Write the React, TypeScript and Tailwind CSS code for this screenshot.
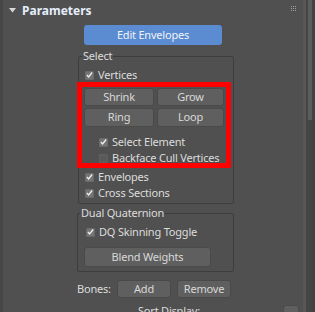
import React from "react";

const FONT = { fontFamily: '"Noto Sans", "DejaVu Sans", sans-serif' };

function Check({ checked }: { checked: boolean }) {
  return (
    <span
      className={
        "flex h-[9px] w-[9px] shrink-0 items-center justify-center rounded-[1px] border " +
        (checked ? "border-[#6a6a6a] bg-[#747474]" : "border-[#626262] bg-[#5a5a5a]")
      }
    >
      {checked && (
        <svg width="8" height="8" viewBox="0 0 8 8">
          <polyline points="1,4 3,6.2 7,1.2" fill="none" stroke="#ececec" strokeWidth="1.6" />
        </svg>
      )}
    </span>
  );
}

function CheckRow({ label, checked, className }: { label: string; checked: boolean; className: string }) {
  return (
    <div className={"flex h-[14px] shrink-0 items-center " + className}>
      <Check checked={checked} />
      <span className="ml-[4px] leading-[14px] text-[#dcdcdc]">{label}</span>
    </div>
  );
}

function Btn({ label, className }: { label: string; className: string }) {
  return (
    <div
      className={
        "flex shrink-0 items-center justify-center rounded-[3px] border border-[#4a4a4a] bg-[#5f5f5f] text-[#d8d8d8] " +
        className
      }
    >
      {label}
    </div>
  );
}

export default function App() {
  return (
    <div
      className="flex h-[312px] w-[315px] overflow-hidden bg-[#505050] text-[11px] tracking-[-0.2px] text-[#dcdcdc]"
      style={FONT}
    >
      <div className="w-[3px] shrink-0 bg-[#474747]" />
      <div className="w-[300px] shrink-0 overflow-hidden">
        {/* header */}
        <div className="flex h-[22px] items-center pl-[6px] pr-[7px]">
          <svg width="7" height="5" viewBox="0 0 7 5" className="mt-[-2px]">
            <polygon points="0,0 7,0 3.5,4.5" fill="#d8d8d8" />
          </svg>
          <span className="ml-[6px] text-[12px] font-bold tracking-normal text-[#e4eefa]">Parameters</span>
          <div className="ml-auto mt-[-6px] grid grid-cols-3 gap-[1px]">
            {Array.from({ length: 9 }).map((_, i) => (
              <span key={i} className="h-[1px] w-[1px] bg-[#a0a0a0]" />
            ))}
          </div>
        </div>

        <div className="flex flex-col pl-[74px]">
          <div className="ml-[7px] mt-[3px] flex h-[20px] w-[138px] shrink-0 items-center justify-center rounded-[3px] bg-[#5b8bd0] text-[#eef3fb]">
            Edit Envelopes
          </div>

          {/* Select group */}
          <fieldset className="ml-[1px] mt-[4px] w-[156px] shrink-0 rounded-[2px] border border-[#3d3d3d] pb-[3px]">
            <legend className="ml-[3px] px-[1px] leading-[14px] text-[#dcdcdc]">Select</legend>
            <CheckRow label="Vertices" checked className="ml-[6px] mt-[5px]" />
            <div className="ml-[-2px] h-[86px] w-[154px] border-[5px] border-[#ff0000]">
              <div className="ml-[2px] mt-[1px] flex gap-[3px]">
                <Btn label="Shrink" className="h-[18px] w-[70px]" />
                <Btn label="Grow" className="h-[18px] w-[67px]" />
              </div>
              <div className="ml-[2px] mt-[2px] flex gap-[3px]">
                <Btn label="Ring" className="h-[19px] w-[70px]" />
                <Btn label="Loop" className="h-[19px] w-[67px]" />
              </div>
              <CheckRow label="Select Element" checked className="ml-[17px] mt-[8px]" />
              <CheckRow label="Backface Cull Vertices" checked={false} className="ml-[17px] mt-[2px]" />
            </div>
            <CheckRow label="Envelopes" checked className="ml-[6px] mt-[2px]" />
            <CheckRow label="Cross Sections" checked className="ml-[6px] mt-[2px]" />
          </fieldset>

          {/* Dual Quaternion group */}
          <fieldset className="mt-[2px] w-[157px] shrink-0 rounded-[2px] border border-[#3d3d3d] pb-[4px]">
            <legend className="ml-[2px] px-[1px] leading-[14px] text-[#dcdcdc]">Dual Quaternion</legend>
            <CheckRow label="DQ Skinning Toggle" checked className="ml-[8px] mt-[5px]" />
            <Btn label="Blend Weights" className="ml-[6px] mt-[8px] h-[20px] w-[127px]" />
          </fieldset>

          {/* Bones */}
          <div className="mt-[8px] flex h-[18px] shrink-0 items-center">
            <span className="w-[40px] text-[#dcdcdc]">Bones:</span>
            <Btn label="Add" className="h-[18px] w-[54px]" />
            <Btn label="Remove" className="ml-[6px] h-[18px] w-[54px]" />
          </div>

          <div className="mt-[7px] flex h-[16px] shrink-0 items-start">
            <span className="ml-[61px] leading-[12px] text-[#dcdcdc]">Sort Display:</span>
            <div className="ml-auto mr-[4px] h-[16px] w-[16px] rounded-[3px] border border-[#4a4a4a] bg-[#5f5f5f]" />
          </div>
        </div>
      </div>
      {/* scrollbar */}
      <div className="flex w-[12px] shrink-0">
        <div className="w-[3px] bg-[#575757]" />
        <div className="w-[2px] bg-[#454545]" />
        <div className="w-[4px] bg-[#454545]">
          <div className="h-[120px] w-full bg-[#5c5c5c]" />
        </div>
        <div className="w-[3px] bg-[#424242]" />
      </div>
    </div>
  );
}
